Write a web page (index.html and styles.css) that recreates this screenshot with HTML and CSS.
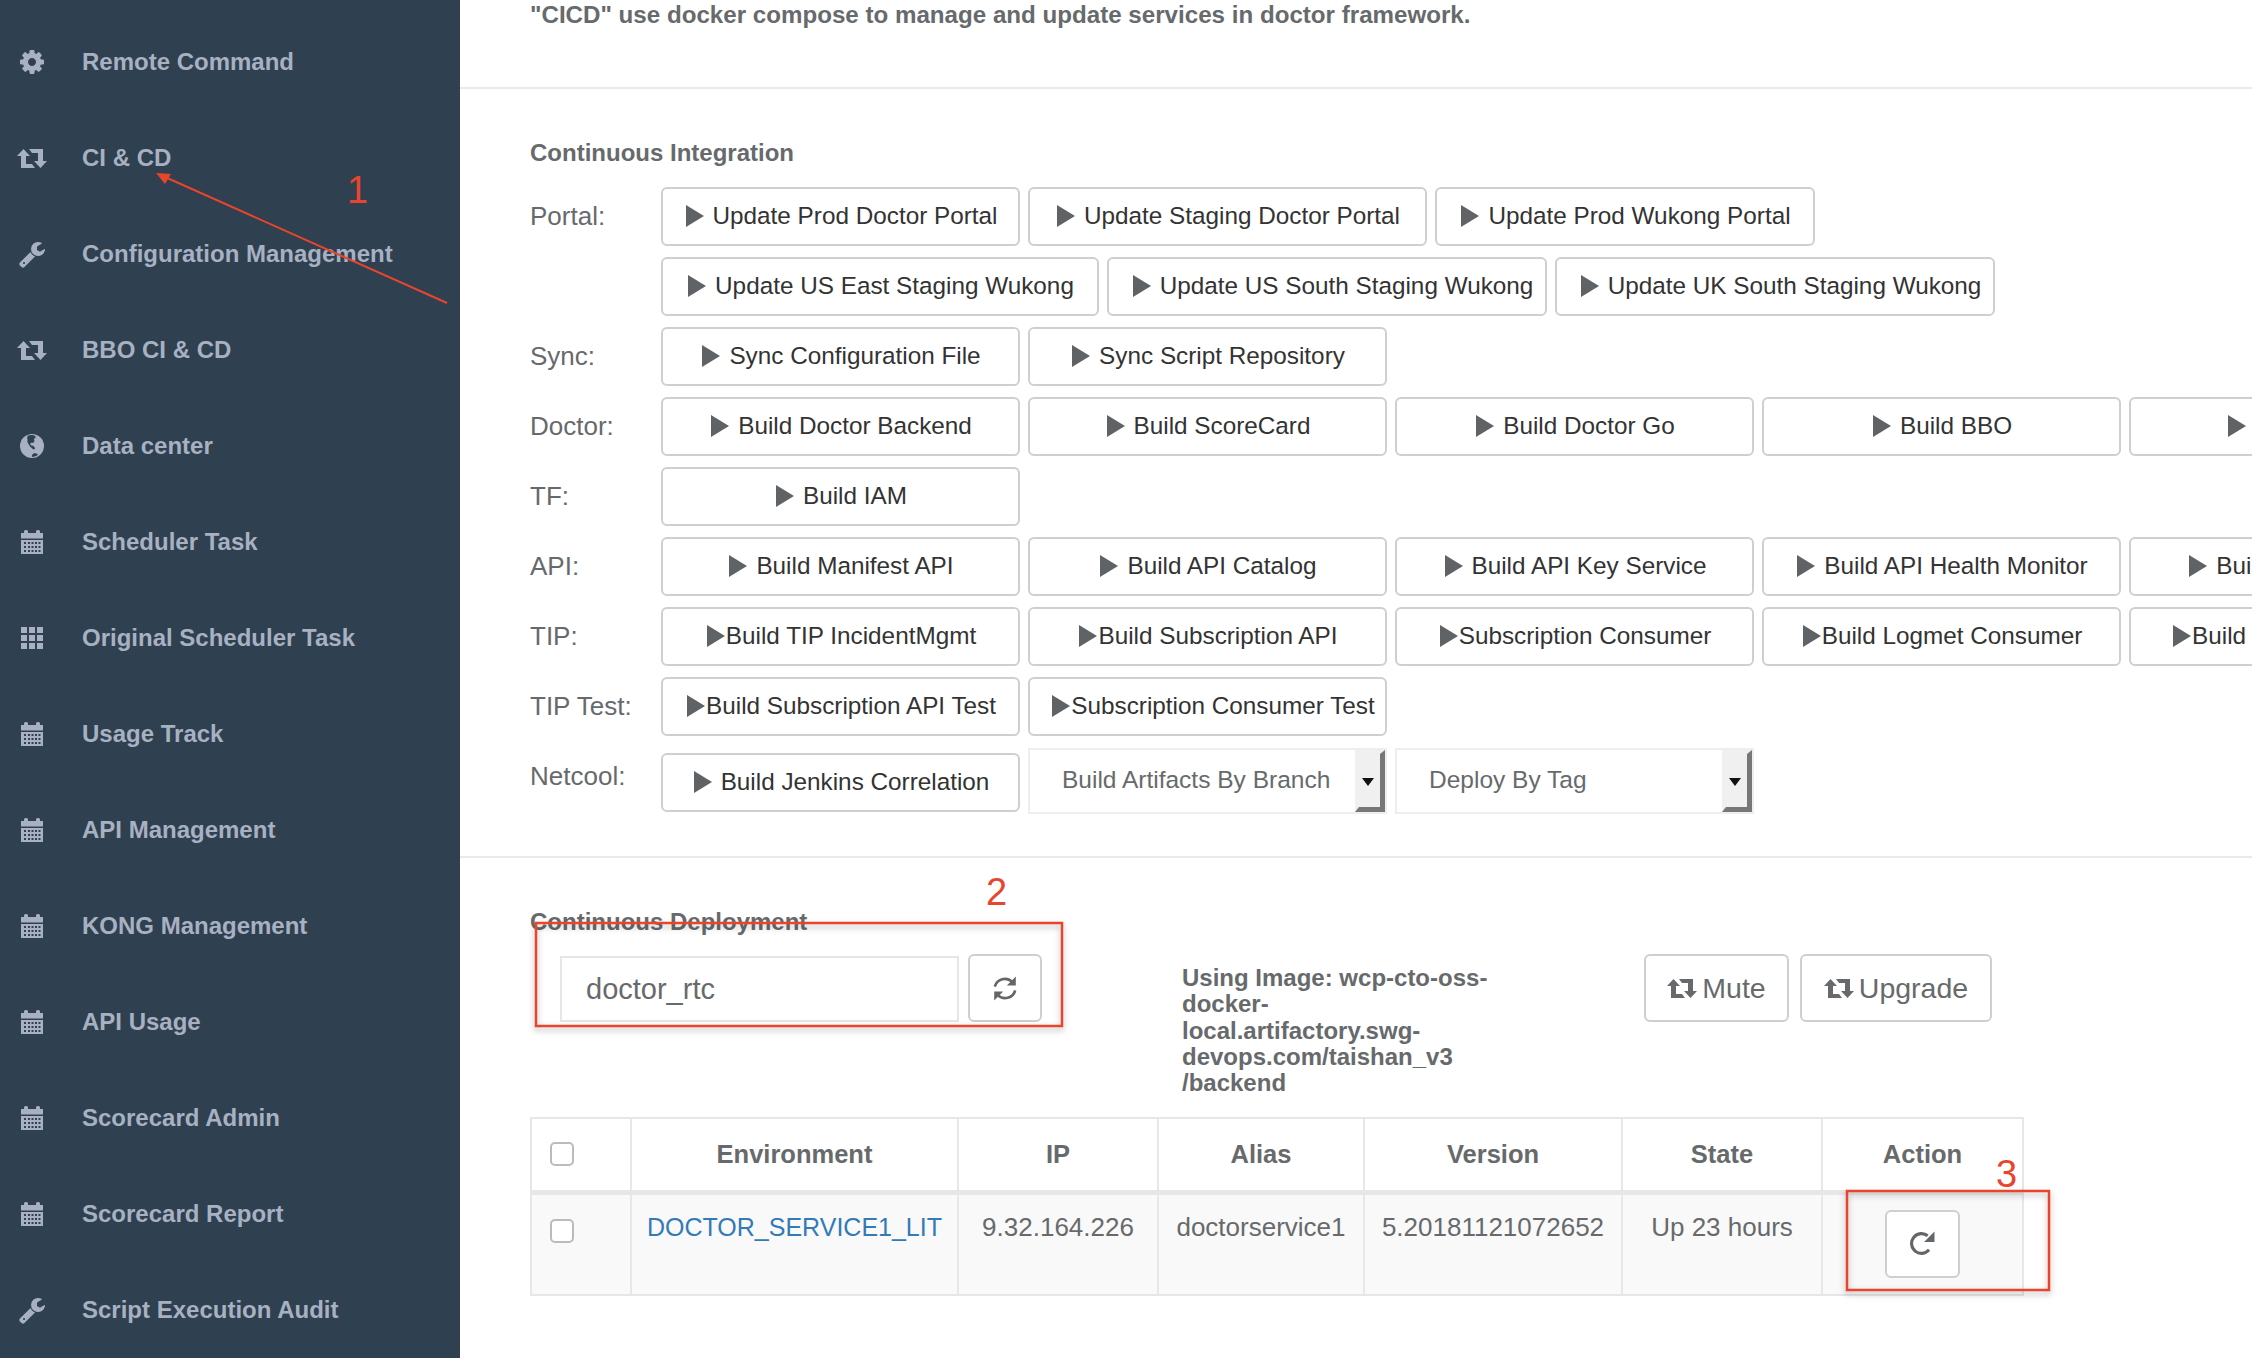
FILE: index.html
```html
<!DOCTYPE html>
<html>
<head>
<meta charset="utf-8">
<title>CI &amp; CD</title>
<link rel="stylesheet" href="styles.css">
</head>
<body>

<svg class="defs" width="0" height="0">
  <symbol id="i-gear" viewBox="0 0 1792 1792"><path d="M1152 896q0-106-75-181t-181-75-181 75-75 181 75 181 181 75 181-75 75-181zm512-109v222q0 12-8 23t-20 13l-185 28q-19 54-39 91 35 50 107 138 10 12 10 25t-9 23q-27 37-99 108t-94 71q-12 0-26-9l-138-108q-44 23-91 38-16 136-29 186-7 28-36 28h-222q-14 0-24.5-8.5t-11.5-21.5l-28-184q-49-16-90-37l-141 107q-10 9-25 9-14 0-25-11-126-114-165-168-7-10-7-23 0-12 8-23 15-21 51-66.5t54-70.5q-27-50-41-99l-183-27q-13-2-21-12.5t-8-23.5v-222q0-12 8-23t19-13l186-28q14-46 39-92-40-57-107-138-10-12-10-24 0-10 9-23 26-36 98.5-107.5t94.5-71.5q13 0 26 10l138 107q44-23 91-38 16-136 29-186 7-28 36-28h222q14 0 24.5 8.5t11.5 21.5l28 184q49 16 90 37l142-107q9-9 24-9 13 0 25 10 129 119 165 170 7 8 7 22 0 12-8 23-15 21-51 66.5t-54 70.5q26 50 41 98l183 28q13 2 21 12.5t8 23.5z"/></symbol>
  <symbol id="i-retweet" viewBox="0 0 30 19"><path d="M6.500 0L13 7H9V15H15L18 19H4V7H0zM23.500 19L17 12H21V4H15L12 0H26V12H30z"/></symbol>
  <symbol id="i-wrench" viewBox="0 0 1792 1792"><path d="M448 1472q0-26-19-45t-45-19-45 19-19 45 19 45 45 19 45-19 19-45zm644-420l-682 682q-37 37-90 37-52 0-91-37l-106-108q-38-36-38-90 0-53 38-91l681-681q39 98 114.5 173.5t173.5 114.5zm634-435q0 39-23 106-47 134-164.5 217.5t-258.5 83.5q-185 0-316.5-131.5t-131.5-316.5 131.5-316.5 316.5-131.5q58 0 121.5 16.5t107.5 46.5q16 11 16 28t-16 28l-293 169v224l193 107q5-3 79-48.5t135.5-81 70.5-35.5q15 0 23.5 10t8.5 25z"/></symbol>
  <symbol id="i-globe" viewBox="0 0 24 24">
    <circle cx="12" cy="12" r="12"/>
    <path class="cut" d="M8 1.500c3-1 6-.5 7.500.8.6 1.400-.6 2.200-1.600 2.800.4 1.300 1 2.400-.2 3.400-1.300.4-2.300-.2-3.200.8-.6 1 .2 2 1.400 2.300 1.600.2 2.600 1.300 3.200 2.700-.5 1.200-1.500 1.400-2.300.6-1.400-1-2.800-2.200-3.600-3.600C8 9.300 6.800 7.800 7.600 5.800 7 4.400 7.200 2.600 8 1.500zM13.500 19.500c1.600-.4 3.300.2 4.500 1.200-1.700 1.300-3.800 2.200-5.800 2.300-.6-1.400 0-2.800 1.300-3.500z"/>
  </symbol>
  <symbol id="i-calendar" viewBox="0 0 22 24">
    <path d="M3 3V1.500Q3 0 4.500 0h1Q7 0 7 1.500V3h8V1.500Q15 0 16.500 0h1Q19 0 19 1.500V3h3v5.500H0V3z"/>
    <path d="M0 10h22v14H0z"/>
    <path class="cut" d="M3 12h2v2H3zM7 12h2v2H7zM10.500 12h2v2h-2zM14 12h2v2h-2zM17.500 12h2v2h-2zM3 16h2v2H3zM7 16h2v2H7zM10.500 16h2v2h-2zM14 16h2v2h-2zM17.500 16h2v2h-2zM3 20h2v2H3zM7 20h2v2H7zM10.500 20h2v2h-2zM14 20h2v2h-2zM17.500 20h2v2h-2z"/>
  </symbol>
  <symbol id="i-th" viewBox="0 0 22 22">
    <path d="M0 0h6v6H0zM8 0h6v6H8zM16 0h6v6h-6zM0 8h6v6H0zM8 8h6v6H8zM16 8h6v6h-6zM0 16h6v6H0zM8 16h6v6H8zM16 16h6v6h-6z"/>
  </symbol>
  <symbol id="i-refresh" viewBox="2 0 20 24">
    <path fill="none" stroke="#63676a" stroke-width="2.200" d="M3.500 10.500A8.700 8.700 0 0 1 18 6.500M20.500 13.500A8.700 8.700 0 0 1 6 17.500"/>
    <path fill="#63676a" d="M21 2v7.500h-7.500zM3 22v-7.500h7.500z"/>
  </symbol>
  <symbol id="i-repeat" viewBox="0 0 24 24">
    <path fill="none" stroke="#63676a" stroke-width="3" d="M18.300 18.100A9.500 9.500 0 1 1 17 4.600"/>
    <path fill="#63676a" d="M23.500 .5v10h-10z"/>
  </symbol>
</svg>

<nav class="sidebar">
  <a class="nav-item"><span class="nav-icon"><svg class="ic-gear"><use href="#i-gear"/></svg></span>Remote Command</a>
  <a class="nav-item"><span class="nav-icon"><svg class="ic-retweet"><use href="#i-retweet"/></svg></span>CI &amp; CD</a>
  <a class="nav-item"><span class="nav-icon"><svg class="ic-wrench"><use href="#i-wrench"/></svg></span>Configuration Management</a>
  <a class="nav-item"><span class="nav-icon"><svg class="ic-retweet"><use href="#i-retweet"/></svg></span>BBO CI &amp; CD</a>
  <a class="nav-item"><span class="nav-icon"><svg class="ic-globe"><use href="#i-globe"/></svg></span>Data center</a>
  <a class="nav-item"><span class="nav-icon"><svg class="ic-cal"><use href="#i-calendar"/></svg></span>Scheduler Task</a>
  <a class="nav-item"><span class="nav-icon"><svg class="ic-th"><use href="#i-th"/></svg></span>Original Scheduler Task</a>
  <a class="nav-item"><span class="nav-icon"><svg class="ic-cal"><use href="#i-calendar"/></svg></span>Usage Track</a>
  <a class="nav-item"><span class="nav-icon"><svg class="ic-cal"><use href="#i-calendar"/></svg></span>API Management</a>
  <a class="nav-item"><span class="nav-icon"><svg class="ic-cal"><use href="#i-calendar"/></svg></span>KONG Management</a>
  <a class="nav-item"><span class="nav-icon"><svg class="ic-cal"><use href="#i-calendar"/></svg></span>API Usage</a>
  <a class="nav-item"><span class="nav-icon"><svg class="ic-cal"><use href="#i-calendar"/></svg></span>Scorecard Admin</a>
  <a class="nav-item"><span class="nav-icon"><svg class="ic-cal"><use href="#i-calendar"/></svg></span>Scorecard Report</a>
  <a class="nav-item"><span class="nav-icon"><svg class="ic-wrench"><use href="#i-wrench"/></svg></span>Script Execution Audit</a>
</nav>

<main class="content">
  <section class="intro">
    <p>"CICD" use docker compose to manage and update services in doctor framework.</p>
  </section>

  <section class="ci">
    <h5>Continuous Integration</h5>

    <div class="row">
      <label>Portal:</label>
      <button class="btn w-fix"><i class="play"></i>Update Prod Doctor Portal</button>
      <button class="btn w-399"><i class="play"></i>Update Staging Doctor Portal</button>
      <button class="btn w-380"><i class="play"></i>Update Prod Wukong Portal</button>
    </div>
    <div class="row">
      <label></label>
      <button class="btn w-438"><i class="play"></i>Update US East Staging Wukong</button>
      <button class="btn w-440 nudge"><i class="play"></i>Update US South Staging Wukong</button>
      <button class="btn w-440 nudge"><i class="play"></i>Update UK South Staging Wukong</button>
    </div>
    <div class="row">
      <label>Sync:</label>
      <button class="btn w-fix"><i class="play"></i>Sync Configuration File</button>
      <button class="btn w-fix"><i class="play"></i>Sync Script Repository</button>
    </div>
    <div class="row">
      <label>Doctor:</label>
      <button class="btn w-fix"><i class="play"></i>Build Doctor Backend</button>
      <button class="btn w-fix"><i class="play"></i>Build ScoreCard</button>
      <button class="btn w-fix"><i class="play"></i>Build Doctor Go</button>
      <button class="btn w-fix"><i class="play"></i>Build BBO</button>
      <button class="btn w-fix"><i class="play"></i>Build Portals</button>
    </div>
    <div class="row">
      <label>TF:</label>
      <button class="btn w-fix"><i class="play"></i>Build IAM</button>
    </div>
    <div class="row">
      <label>API:</label>
      <button class="btn w-fix"><i class="play"></i>Build Manifest API</button>
      <button class="btn w-fix"><i class="play"></i>Build API Catalog</button>
      <button class="btn w-fix"><i class="play"></i>Build API Key Service</button>
      <button class="btn w-fix"><i class="play"></i>Build API Health Monitor</button>
      <button class="btn w-fix"><i class="play"></i>Build API Gateways</button>
    </div>
    <div class="row tight">
      <label>TIP:</label>
      <button class="btn w-fix"><i class="play"></i>Build TIP IncidentMgmt</button>
      <button class="btn w-fix"><i class="play"></i>Build Subscription API</button>
      <button class="btn w-fix"><i class="play"></i>Subscription Consumer</button>
      <button class="btn w-fix"><i class="play"></i>Build Logmet Consumer</button>
      <button class="btn w-fix"><i class="play"></i>Build Events Consumer</button>
    </div>
    <div class="row tight">
      <label>TIP Test:</label>
      <button class="btn w-fix"><i class="play"></i>Build Subscription API Test</button>
      <button class="btn w-fix nudge"><i class="play"></i>Subscription Consumer Test</button>
    </div>
    <div class="row last">
      <label>Netcool:</label>
      <button class="btn w-fix"><i class="play"></i>Build Jenkins Correlation</button>
      <div class="select w-fix">Build Artifacts By Branch<span class="select-arrow"></span></div>
      <div class="select w-fix">Deploy By Tag<span class="select-arrow"></span></div>
    </div>
  </section>

  <section class="cd">
    <h5>Continuous Deployment</h5>

    <div class="cd-bar">
      <div class="search-input">doctor_rtc</div>
      <button class="btn btn-icon"><svg class="ic-refresh"><use href="#i-refresh"/></svg></button>
      <div class="image-info">Using Image: wcp-cto-oss-<br>docker-<br>local.artifactory.swg-<br>devops.com/taishan_v3<br>/backend</div>
      <button class="btn btn-lg w-mute"><svg class="ic-retweet"><use href="#i-retweet"/></svg>Mute</button>
      <button class="btn btn-lg w-upgrade"><svg class="ic-retweet"><use href="#i-retweet"/></svg>Upgrade</button>
    </div>

    <table class="env-table">
      <thead>
        <tr>
          <th class="c-check"><input type="checkbox"></th>
          <th class="c-env">Environment</th>
          <th class="c-ip">IP</th>
          <th class="c-alias">Alias</th>
          <th class="c-version">Version</th>
          <th class="c-state">State</th>
          <th class="c-action">Action</th>
        </tr>
      </thead>
      <tbody>
        <tr>
          <td><input type="checkbox"></td>
          <td><a class="env-link">DOCTOR_SERVICE1_LIT</a></td>
          <td>9.32.164.226</td>
          <td>doctorservice1</td>
          <td>5.20181121072652</td>
          <td>Up 23 hours</td>
          <td class="action-cell"><button class="btn btn-action"><svg class="ic-repeat"><use href="#i-repeat"/></svg></button></td>
        </tr>
      </tbody>
    </table>
  </section>
</main>

<!-- red marks drawn on top of the screenshot -->
<svg class="marks" width="2252" height="1358">
  <path class="mark-line" d="M447 303L165 177"/>
  <path class="mark-head" d="M156 173L171 174L165 184z"/>
  <rect class="mark-box" x="536" y="923" width="526" height="103"/>
  <rect class="mark-box" x="1847" y="1191" width="202" height="99"/>
  <text class="mark-num" x="347" y="203">1</text>
  <text class="mark-num" x="986" y="905">2</text>
  <text class="mark-num" x="1996" y="1187">3</text>
</svg>

</body>
</html>
```

FILE: styles.css
```css
* {
  box-sizing: border-box;
}

html, body {
  margin: 0;
  height: 1358px;
  overflow: hidden;
}

body {
  display: flex;
  position: relative;
  background: #fff;
  color: #676a6c;
  font-family: "Liberation Sans", Arial, sans-serif;
  font-size: 24px;
}

.defs {
  position: absolute;
}

/* sidebar */
.sidebar {
  flex: 0 0 460px;
  height: 1358px;
  padding-top: 14px;
  background: #2f4050;
  color: #a7b1c2;
  overflow: hidden;
}
.nav-item {
  display: flex;
  align-items: center;
  height: 96px;
  padding-left: 14px;
  font-size: 24px;
  font-weight: bold;
}
.nav-icon {
  display: flex;
  flex: 0 0 36px;
  justify-content: center;
  margin-right: 32px;
  fill: #a7b1c2;
}
.cut {
  fill: #2f4050;
}
.ic-gear { width: 28px; height: 28px; }
.ic-retweet { width: 30px; height: 19px; }
.ic-wrench { width: 28px; height: 28px; }
.ic-globe { width: 24px; height: 24px; }
.ic-cal { width: 22px; height: 24px; }
.ic-th { width: 22px; height: 22px; }

/* main column */
.content {
  flex: 1;
  min-width: 0;
  overflow: hidden;
}
.intro {
  height: 89px;
  padding: 2px 70px 0;
  border-bottom: 2px solid #e7eaec;
}
.intro p {
  margin: 0;
  font-size: 24.15px;
  font-weight: bold;
  line-height: 26px;
}
h5 {
  margin: 0;
  font-size: 24px;
  line-height: 26px;
}
.ci {
  height: 769px;
  padding: 51px 0 0 70px;
  border-bottom: 2px solid #e7eaec;
}
.ci h5 {
  margin-bottom: 21px;
}
.row {
  display: flex;
  gap: 8px;
  margin-bottom: 11px;
}
.row.last {
  align-items: flex-start;
  margin-top: 12px;
  margin-bottom: 0;
}
.row label {
  display: flex;
  flex: 0 0 123px;
  align-items: center;
  height: 59px;
  font-size: 26px;
}
.row.last label {
  height: 56px;
}
.row.last .btn {
  margin-top: 5px;
}

/* buttons */
.btn {
  display: inline-flex;
  flex: none;
  align-items: center;
  justify-content: center;
  height: 59px;
  padding: 0 0 2px 2px;
  background: #fff;
  border: 2px solid #cfcfcf;
  border-radius: 6px;
  color: #333;
  font-family: inherit;
  font-size: 24.3px;
}
.btn.nudge {
  padding-left: 12px;
}
.play {
  flex: none;
  width: 0;
  height: 0;
  margin-right: 9px;
  border-left: 18px solid #5f6366;
  border-top: 11px solid transparent;
  border-bottom: 11px solid transparent;
}
.tight .play {
  margin-right: 1px;
}
.w-fix { width: 359px; }
.w-399 { width: 399px; }
.w-380 { width: 380px; }
.w-438 { width: 438px; }
.w-440 { width: 440px; }

.select {
  display: flex;
  flex: none;
  position: relative;
  align-items: center;
  height: 66px;
  padding: 0 0 2px 32px;
  border: 2px solid #eeeeee;
  font-size: 24.5px;
}
.select-arrow {
  position: absolute;
  top: 0;
  right: 0;
  bottom: 0;
  width: 30px;
  background: #f0f0f0;
  border-style: solid;
  border-width: 4px 5px 5px 4px;
  border-color: #f0f0f0 #777 #777 #f0f0f0;
}
.select-arrow::after {
  content: "";
  position: absolute;
  top: 24px;
  left: 3px;
  border-top: 8px solid #111;
  border-left: 6px solid transparent;
  border-right: 6px solid transparent;
}

/* deployment */
.cd {
  padding: 51px 0 0 70px;
}
.cd h5 {
  margin-bottom: 19px;
}
.cd-bar {
  display: flex;
  align-items: flex-start;
  height: 163px;
}
.search-input {
  display: flex;
  align-items: center;
  width: 399px;
  height: 66px;
  margin: 2px 9px 0 30px;
  padding-left: 24px;
  border: 2px solid #e5e6e7;
  font-size: 29px;
}
.btn-icon {
  width: 74px;
  height: 68px;
  padding: 0;
}
.ic-refresh { width: 24px; height: 29px; }
.image-info {
  width: 462px;
  margin: 11px 0 0 140px;
  font-weight: bold;
  line-height: 26.3px;
}
.btn-lg {
  height: 68px;
  padding: 0;
  color: #676a6c;
  font-size: 28.5px;
  fill: #676a6c;
}
.btn-lg svg {
  margin-right: 5px;
}
.w-mute { width: 145px; margin-right: 11px; }
.w-upgrade { width: 192px; }

/* table */
.env-table {
  width: 1492px;
  border-collapse: collapse;
  table-layout: fixed;
  font-size: 26px;
}
.env-table th, .env-table td {
  border: 2px solid #e7e7e7;
  padding: 0;
  text-align: center;
}
.env-table th {
  height: 74px;
  border-bottom-width: 5px;
  font-size: 25.5px;
}
.env-table td {
  height: 103px;
  padding-top: 17px;
  background: #f9f9f9;
  line-height: 30px;
  vertical-align: top;
}
.c-check { width: 100px; }
.c-env { width: 327px; }
.c-ip { width: 200px; }
.c-alias { width: 206px; }
.c-version { width: 258px; }
.c-state { width: 200px; }
.c-action { width: 201px; }
.env-table input {
  display: block;
  appearance: none;
  width: 24px;
  height: 24px;
  margin: 0 0 0 18px;
  background: #fff;
  border: 2px solid #bbb;
  border-radius: 5px;
}
.env-table td input {
  margin-top: 7px;
}
.env-link {
  color: #337ab7;
  font-size: 25px;
}
.env-table .action-cell {
  padding-top: 15px;
}
.btn-action {
  width: 75px;
  height: 68px;
  padding: 0;
}
.ic-repeat { width: 25px; height: 25px; }

/* annotations */
.marks {
  position: absolute;
  top: 0;
  left: 0;
  pointer-events: none;
}
.mark-line {
  fill: none;
  stroke: #e8452c;
  stroke-width: 2;
}
.mark-head {
  fill: #e8452c;
}
.mark-box {
  fill: none;
  stroke: #e8452c;
  stroke-width: 2.5;
  filter: drop-shadow(0 3px 3px rgba(0, 0, 0, 0.3));
}
.mark-num {
  fill: #e8452c;
  font-family: "Liberation Sans", Arial, sans-serif;
  font-size: 38px;
}
```
